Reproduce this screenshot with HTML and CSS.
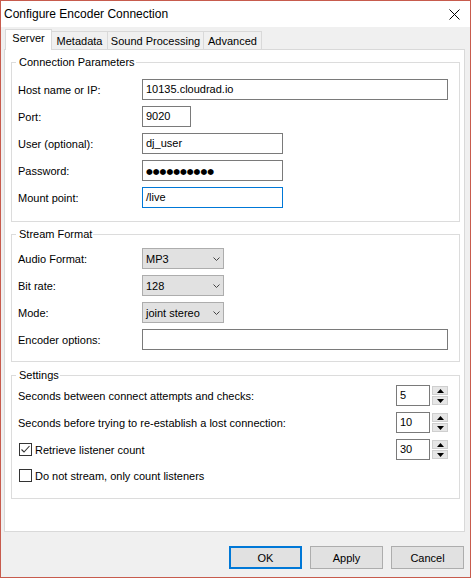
FILE: index.html
```html
<!DOCTYPE html>
<html>
<head>
<meta charset="utf-8">
<link rel="stylesheet" href="styles.css">
</head>
<body>
<div class="window">
  <div class="titlebar">
    <span class="title">Configure Encoder Connection</span>
    <svg class="close" width="11" height="11" viewBox="0 0 11 11"><path d="M0.5 0.5 L10.5 10.5 M10.5 0.5 L0.5 10.5" stroke="#000" stroke-width="1" fill="none"/></svg>
  </div>
  <div class="tabs">
    <div class="tab active t-server">Server</div>
    <div class="tab t-meta">Metadata</div>
    <div class="tab t-sound">Sound Processing</div>
    <div class="tab t-adv">Advanced</div>
  </div>
  <div class="panel">
    <fieldset class="group g-conn">
      <legend>Connection Parameters</legend>
      <div class="row"><span class="label">Host name or IP:</span><div class="field w-long">10135.cloudrad.io</div></div>
      <div class="row"><span class="label">Port:</span><div class="field w-port">9020</div></div>
      <div class="row"><span class="label">User (optional):</span><div class="field w-mid">dj_user</div></div>
      <div class="row"><span class="label">Password:</span><div class="field w-mid"><span class="dots">●●●●●●●●●●</span></div></div>
      <div class="row"><span class="label">Mount point:</span><div class="field w-mid focused">/live</div></div>
    </fieldset>
    <fieldset class="group g-stream">
      <legend>Stream Format</legend>
      <div class="row"><span class="label">Audio Format:</span><div class="select"><span>MP3</span><svg class="chev" width="7" height="4" viewBox="0 0 7 4"><path d="M0.5 0.5 L3.5 3.5 L6.5 0.5" stroke="#444" fill="none"/></svg></div></div>
      <div class="row"><span class="label">Bit rate:</span><div class="select"><span>128</span><svg class="chev" width="7" height="4" viewBox="0 0 7 4"><path d="M0.5 0.5 L3.5 3.5 L6.5 0.5" stroke="#444" fill="none"/></svg></div></div>
      <div class="row"><span class="label">Mode:</span><div class="select"><span>joint stereo</span><svg class="chev" width="7" height="4" viewBox="0 0 7 4"><path d="M0.5 0.5 L3.5 3.5 L6.5 0.5" stroke="#444" fill="none"/></svg></div></div>
      <div class="row"><span class="label">Encoder options:</span><div class="field w-long"></div></div>
    </fieldset>
    <fieldset class="group g-settings">
      <legend>Settings</legend>
      <div class="row"><span class="label-wide">Seconds between connect attempts and checks:</span>
        <div class="spin"><div class="field spin-field">5</div><div class="spin-btns"><div class="sbtn"><svg width="7" height="4" viewBox="0 0 7 4"><path d="M0 4 L3.5 0 L7 4 Z" fill="#000"/></svg></div><div class="sbtn"><svg width="7" height="4" viewBox="0 0 7 4"><path d="M0 0 L3.5 4 L7 0 Z" fill="#000"/></svg></div></div></div>
      </div>
      <div class="row"><span class="label-wide">Seconds before trying to re-establish a lost connection:</span>
        <div class="spin"><div class="field spin-field">10</div><div class="spin-btns"><div class="sbtn"><svg width="7" height="4" viewBox="0 0 7 4"><path d="M0 4 L3.5 0 L7 4 Z" fill="#000"/></svg></div><div class="sbtn"><svg width="7" height="4" viewBox="0 0 7 4"><path d="M0 0 L3.5 4 L7 0 Z" fill="#000"/></svg></div></div></div>
      </div>
      <div class="row"><span class="label-wide check-label"><span class="checkbox"><svg width="11" height="11" viewBox="0 0 11 11"><path d="M1.5 5.5 L4 8 L9.5 2" stroke="#333" stroke-width="1.1" fill="none"/></svg></span>Retrieve listener count</span>
        <div class="spin"><div class="field spin-field">30</div><div class="spin-btns"><div class="sbtn"><svg width="7" height="4" viewBox="0 0 7 4"><path d="M0 4 L3.5 0 L7 4 Z" fill="#000"/></svg></div><div class="sbtn"><svg width="7" height="4" viewBox="0 0 7 4"><path d="M0 0 L3.5 4 L7 0 Z" fill="#000"/></svg></div></div></div>
      </div>
      <div class="row row-last"><span class="label-wide check-label"><span class="checkbox"></span>Do not stream, only count listeners</span></div>
    </fieldset>
  </div>
  <div class="buttons">
    <div class="btn default">OK</div>
    <div class="btn">Apply</div>
    <div class="btn">Cancel</div>
  </div>
</div>
</body>
</html>
```

FILE: styles.css
```css
html, body {
  margin: 0;
  padding: 0;
  background: #f0f0f0;
}
body {
  font-family: "Liberation Sans", Arial, sans-serif;
  font-size: 11px;
  color: #000;
}
.window {
  width: 471px;
  height: 578px;
  box-sizing: border-box;
  border: 1px solid #c75b4d;
  background: #f0f0f0;
  display: flex;
  flex-direction: column;
}
.titlebar {
  height: 26px;
  background: #fff;
  display: flex;
  align-items: center;
  flex-shrink: 0;
}
.title {
  font-size: 12px;
  padding-left: 3px;
}
.close {
  margin-left: auto;
  margin-right: 10px;
  display: block;
}
.tabs {
  display: flex;
  align-items: flex-start;
  height: 21px;
  margin-top: 2px;
  margin-left: 4px;
  margin-bottom: -1px;
  position: relative;
  z-index: 1;
  flex-shrink: 0;
}
.tab {
  box-sizing: border-box;
  height: 18px;
  margin-top: 2px;
  border-top: 1px solid #d9d9d9;
  border-right: 1px solid #d9d9d9;
  background: #f0f0f0;
  text-align: center;
  line-height: 14px;
  padding-top: 2px;
}
.tab.active {
  height: 21px;
  margin-top: 0;
  border-left: 1px solid #d9d9d9;
  background: #fff;
  padding-top: 1px;
}
.t-server { width: 47px; }
.t-meta { width: 56px; }
.t-sound { width: 96px; }
.t-adv { width: 58px; }
.panel {
  box-sizing: border-box;
  height: 483px;
  margin: 0 5px 0 3px;
  border: 1px solid #d9d9d9;
  background: #fff;
  flex-shrink: 0;
}
.group {
  margin: 0 4px 0 6px;
  border: 1px solid #dcdcdc;
  min-width: 0;
  padding-left: 6px;
  padding-right: 11px;
  display: flex;
  flex-direction: column;
  gap: 6px;
}
.group legend {
  line-height: 14px;
  padding: 0 1px 0 3px;
  margin-left: -2px;
}
.g-conn { margin-top: 5px; padding-top: 10px; padding-bottom: 13px; }
.g-stream { margin-top: 5px; padding-top: 7px; padding-bottom: 11px; }
.g-settings { margin-top: 6px; padding-top: 3px; padding-bottom: 12px; }
.row {
  display: flex;
  align-items: center;
  height: 21px;
}
.row-last { margin-top: -1px; }
.label {
  width: 124px;
  flex-shrink: 0;
}
.label-wide {
  flex: 1;
  display: flex;
  align-items: center;
}
.field {
  box-sizing: border-box;
  height: 21px;
  border: 1px solid #7a7a7a;
  background: #fff;
  padding-left: 3px;
  line-height: 19px;
  white-space: nowrap;
  overflow: hidden;
}
.field.focused { border-color: #0078d7; }
.w-long { flex: 1; }
.w-port { width: 49px; }
.w-mid { width: 141px; }
.dots {
  font-family: "DejaVu Sans", sans-serif;
  font-size: 7.8px;
  letter-spacing: 0;
}
.select {
  box-sizing: border-box;
  width: 82px;
  height: 21px;
  border: 1px solid #adadad;
  background: #e1e1e1;
  display: flex;
  align-items: center;
  justify-content: space-between;
  padding: 0 3px 0 3px;
}
.chev { display: block; }
.spin {
  display: flex;
  align-items: center;
  gap: 2px;
}
.spin-field { width: 34px; }
.spin-btns {
  display: flex;
  flex-direction: column;
  gap: 1px;
}
.sbtn {
  box-sizing: border-box;
  width: 16px;
  height: 9px;
  border: 1px solid #cfcfcf;
  background: #e6e6e6;
  display: flex;
  align-items: center;
  justify-content: center;
}
.sbtn svg { display: block; }
.check-label { gap: 3px; }
.checkbox {
  box-sizing: border-box;
  width: 13px;
  height: 13px;
  margin-left: 1px;
  border: 1px solid #333;
  background: #fff;
  display: flex;
  align-items: center;
  justify-content: center;
}
.checkbox svg { display: block; }
.buttons {
  display: flex;
  justify-content: flex-end;
  gap: 8px;
  margin-top: 14px;
  padding-right: 6px;
}
.btn {
  box-sizing: border-box;
  width: 73px;
  height: 23px;
  border: 1px solid #adadad;
  background: #e1e1e1;
  display: flex;
  align-items: center;
  justify-content: center;
}
.btn.default {
  border: 2px solid #0078d7;
}
```
